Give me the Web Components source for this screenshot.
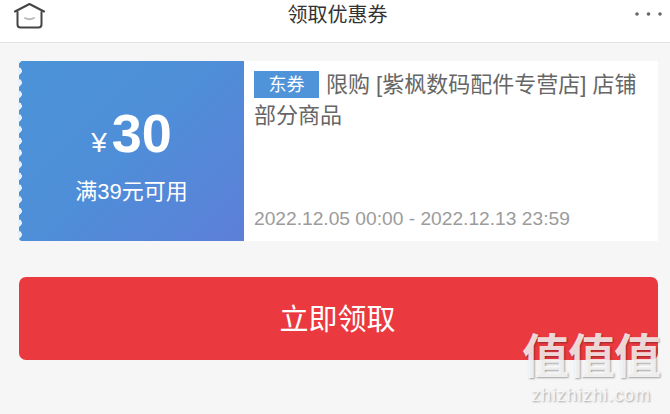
<!DOCTYPE html>
<html lang="zh">
<head>
<meta charset="utf-8">
<title>领取优惠券</title>
<style>
  html, body { margin: 0; height: 100%; }
  body {
    position: relative;
    overflow: hidden;
    background: #f6f6f6;
    font-family: "Liberation Sans", "Noto Sans CJK SC", sans-serif;
  }
</style>
</head>
<body>
<top-bar>领取优惠券</top-bar>
<coupon-card amount="30" rule="满39元可用" tag="东券" dates="2022.12.05 00:00 - 2022.12.13 23:59">限购 [紫枫数码配件专营店] 店铺部分商品</coupon-card>
<claim-button>立即领取</claim-button>
<site-watermark></site-watermark>

<script>
class TopBar extends HTMLElement {
  constructor() {
    super();
    this.attachShadow({ mode: "open" }).innerHTML = `
    <style>
      :host {
        display: flex;
        align-items: flex-start;
        justify-content: space-between;
        box-sizing: border-box;
        height: 43px;
        padding: 3px 8px 0 14px;
        background: #fff;
        border-bottom: 1px solid #e4e4e4;
      }
      svg { display: block; }
      .title {
        margin: 0 6px 0 0;
        font-size: 20px;
        line-height: 25px;
        color: #333;
      }
      .more { margin-top: 8px; }
    </style>
    <svg width="32" height="26" viewBox="0 0 32 26" fill="none">
      <path d="M1 8.5 15.5 1 30 8.5" stroke="#444" stroke-width="2" stroke-linecap="round" stroke-linejoin="round"/>
      <path d="M3.5 9V21.5Q3.5 24.5 6.5 24.5H24.5Q27.5 24.5 27.5 21.5V9" stroke="#444" stroke-width="2" stroke-linecap="round"/>
      <path d="M11 15Q15.5 17.5 20 15" stroke="#bbb" stroke-width="2" stroke-linecap="round"/>
    </svg>
    <p class="title"><slot></slot></p>
    <svg class="more" width="27" height="6" viewBox="0 0 27 6" fill="#666">
      <circle cx="2" cy="3" r="1.8"/><circle cx="13.5" cy="3" r="1.8"/><circle cx="25" cy="3" r="1.8"/>
    </svg>`;
  }
}

class CouponCard extends HTMLElement {
  constructor() {
    super();
    this.attachShadow({ mode: "open" }).innerHTML = `
    <style>
      :host {
        display: flex;
        height: 180px;
        margin: 18px 12px 0 19px;
        background: #fff;
      }
      .value {
        position: relative;
        flex: 0 0 225px;
        display: flex;
        flex-direction: column;
        align-items: center;
        color: #fff;
        background: linear-gradient(135deg, #4b93d8 0%, #4e8fd8 45%, #5d7fd8 100%);
        border-radius: 3px 0 0 3px;
      }
      .value::before {
        content: "";
        position: absolute;
        left: -1px;
        top: 0;
        bottom: 0;
        width: 6px;
        background: radial-gradient(circle at 0 6px, #e9f2fb 3.6px, transparent 4px) 0 4px / 6px 11.7px repeat-y;
      }
      .amount {
        display: flex;
        align-items: baseline;
        margin-top: 42px;
        height: 60px;
        line-height: 60px;
      }
      .cur { font-size: 28px; margin-right: 5px; }
      .num { font-size: 54px; font-weight: bold; }
      .rule { margin-top: 15px; font-size: 22px; line-height: 28px; }
      .info {
        flex: 1;
        display: flex;
        flex-direction: column;
        justify-content: space-between;
        padding: 8px 10px 9px 10px;
      }
      .desc {
        margin: 0;
        font-size: 22px;
        line-height: 31px;
        color: #666;
      }
      .tag {
        display: inline-block;
        width: 65px;
        height: 27px;
        margin-right: 7px;
        font-size: 18px;
        line-height: 29px;
        text-align: center;
        vertical-align: 1px;
        color: #fff;
        background: #4f93d8;
      }
      .dates { font-size: 19.2px; line-height: 26px; color: #9b9b9b; }
    </style>
    <div class="value">
      <div class="amount"><span class="cur">¥</span><span class="num">${this.getAttribute("amount")}</span></div>
      <div class="rule">${this.getAttribute("rule")}</div>
    </div>
    <div class="info">
      <p class="desc"><span class="tag">${this.getAttribute("tag")}</span><slot></slot></p>
      <div class="dates">${this.getAttribute("dates")}</div>
    </div>`;
  }
}

class ClaimButton extends HTMLElement {
  constructor() {
    super();
    this.attachShadow({ mode: "open" }).innerHTML = `
    <style>
      :host {
        display: flex;
        align-items: center;
        justify-content: center;
        box-sizing: border-box;
        height: 83px;
        margin: 36px 12px 0 19px;
        padding: 0 2px 4px 0;
        font-size: 29px;
        color: #fff;
        background: #ea3a3f;
        border-radius: 7px;
      }
    </style>
    <slot></slot>`;
  }
}

// sits over the button corner, like the site's stamp on the picture
class SiteWatermark extends HTMLElement {
  constructor() {
    super();
    this.attachShadow({ mode: "open" }).innerHTML = `
    <style>
      :host {
        position: absolute;
        left: 520px;
        top: 329px;
        width: 142px;
        text-align: center;
        color: rgba(255, 255, 255, .82);
        text-shadow: 1px 1px 2px rgba(0, 0, 0, .35);
      }
      .mark { font-size: 47px; line-height: 56px; letter-spacing: -1px; white-space: nowrap; font-weight: bold; }
      .url { font-size: 18px; line-height: 20px; letter-spacing: .9px; white-space: nowrap; }
    </style>
    <div class="mark">值值值</div>
    <div class="url">zhizhizhi.com</div>`;
  }
}

customElements.define("top-bar", TopBar);
customElements.define("coupon-card", CouponCard);
customElements.define("claim-button", ClaimButton);
customElements.define("site-watermark", SiteWatermark);
</script>
</body>
</html>
